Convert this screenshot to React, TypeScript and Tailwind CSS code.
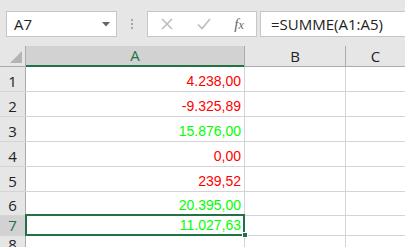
import React from "react";

const rows: { v: string; c: string; h: string }[] = [
  { v: "4.238,00", c: "text-[#ff0000]", h: "h-[25px]" },
  { v: "-9.325,89", c: "text-[#ff0000]", h: "h-[25px]" },
  { v: "15.876,00", c: "text-[#00ff00]", h: "h-[25px]" },
  { v: "0,00", c: "text-[#ff0000]", h: "h-[25px]" },
  { v: "239,52", c: "text-[#ff0000]", h: "h-[25px]" },
  { v: "20.395,00", c: "text-[#00ff00]", h: "h-[24px]" },
  { v: "11.027,63", c: "text-[#00ff00]", h: "h-[20px]" },
];

export default function App() {
  return (
    <div className="w-[405px] h-[247px] overflow-hidden bg-white font-['Liberation_Sans',sans-serif]">
      {/* formula bar */}
      <div className="h-[46px] bg-[#e6e6e6] flex items-start pt-[11px] pl-[6px]">
        <div className="w-[111px] h-[26px] bg-white border border-[#c6c6c6] flex items-center pl-[7px] pr-[6px]">
          <span className="text-[15px] text-[#222] font-['Open_Sans',sans-serif] flex-1 leading-none">A7</span>
          <svg width="8" height="5" viewBox="0 0 8 5"><path d="M0 0h8L4 4.5z" fill="#666" /></svg>
        </div>
        <div className="w-[30px] h-[26px] flex flex-col items-center justify-center gap-[2px]">
          <div className="w-[2px] h-[2px] bg-[#a6a6a6]" />
          <div className="w-[2px] h-[2px] bg-[#a6a6a6]" />
          <div className="w-[2px] h-[2px] bg-[#a6a6a6]" />
        </div>
        <div className="w-[110px] h-[26px] bg-white border border-[#c6c6c6] flex items-center">
          <div className="w-[38px] flex justify-center">
            <svg width="12" height="12" viewBox="0 0 12 12"><path d="M1 1L11 11M11 1L1 11" stroke="#bdbdbd" strokeWidth="1.6" /></svg>
          </div>
          <div className="w-[36px] flex justify-center">
            <svg width="14" height="12" viewBox="0 0 14 12"><path d="M1 6.5L5 10.5L13 1" stroke="#bdbdbd" strokeWidth="1.6" fill="none" /></svg>
          </div>
          <div className="flex-1 flex justify-center">
            <span className="font-['Liberation_Serif',serif] italic text-[15px] text-[#666] leading-none">
              f<span className="text-[12px]">x</span>
            </span>
          </div>
        </div>
        <div className="ml-[3px] flex-1 h-[26px] bg-white border border-[#c6c6c6] border-r-0 flex items-center pl-[10px]">
          <span className="text-[15px] text-[#222] font-['Open_Sans',sans-serif] leading-none">=SUMME(A1:A5)</span>
        </div>
      </div>
      {/* column headers */}
      <div className="flex h-[21px] bg-[#e6e6e6] border-b border-[#ababab]">
        <div className="w-[26px] border-r border-[#ababab] relative">
          <svg className="absolute right-[3px] bottom-[3px]" width="12" height="12" viewBox="0 0 12 12"><path d="M12 0V12H0z" fill="#b4b4b4" /></svg>
        </div>
        <div className="w-[218px] bg-[#d2d2d2] border-b-2 border-[#217346] -mb-[1px] flex items-center justify-center text-[15px] text-[#217346] font-['Open_Sans',sans-serif]">A</div>
        <div className="w-[102px] border-r border-l border-[#ababab] flex items-center justify-center text-[15px] text-[#222] font-['Open_Sans',sans-serif]">B</div>
        <div className="flex-1 flex items-center justify-center text-[15px] text-[#222] font-['Open_Sans',sans-serif]">C</div>
      </div>
      {/* rows */}
      {rows.map((r, i) => {
        const sel = i === 6;
        return (
          <div key={i} className={`flex ${r.h} border-b border-[#d4d4d4]`}>
            <div className={`w-[26px] border-r border-[#ababab] flex items-end justify-center pb-[2px] leading-none text-[15px] font-['Open_Sans',sans-serif] ${sel ? "bg-[#d2d2d2] text-[#217346]" : "bg-[#e6e6e6] text-[#222]"}`}>
              {i + 1}
            </div>
            <div className={`w-[218px] relative flex items-end justify-end pr-[3px] pb-[3px] leading-none text-[14px] ${r.c}`}>
              {r.v}
              {sel && (
                <>
                  <div className="absolute -left-[1px] -top-[2px] -right-[1px] -bottom-[1px] border-2 border-[#217346]" />
                  <div className="absolute -right-[4px] -bottom-[3px] w-[6px] h-[6px] bg-[#217346] border border-white" />
                </>
              )}
            </div>
            <div className="w-[102px] border-r border-l border-[#d4d4d4]" />
            <div className="flex-1" />
          </div>
        );
      })}
      <div className="flex h-[24px]">
        <div className="w-[26px] border-r border-[#ababab] bg-[#e6e6e6] flex items-start justify-center pt-[1px] leading-none text-[15px] text-[#222] font-['Open_Sans',sans-serif]">8</div>
        <div className="w-[218px]" />
        <div className="w-[102px] border-r border-l border-[#d4d4d4]" />
      </div>
    </div>
  );
}
